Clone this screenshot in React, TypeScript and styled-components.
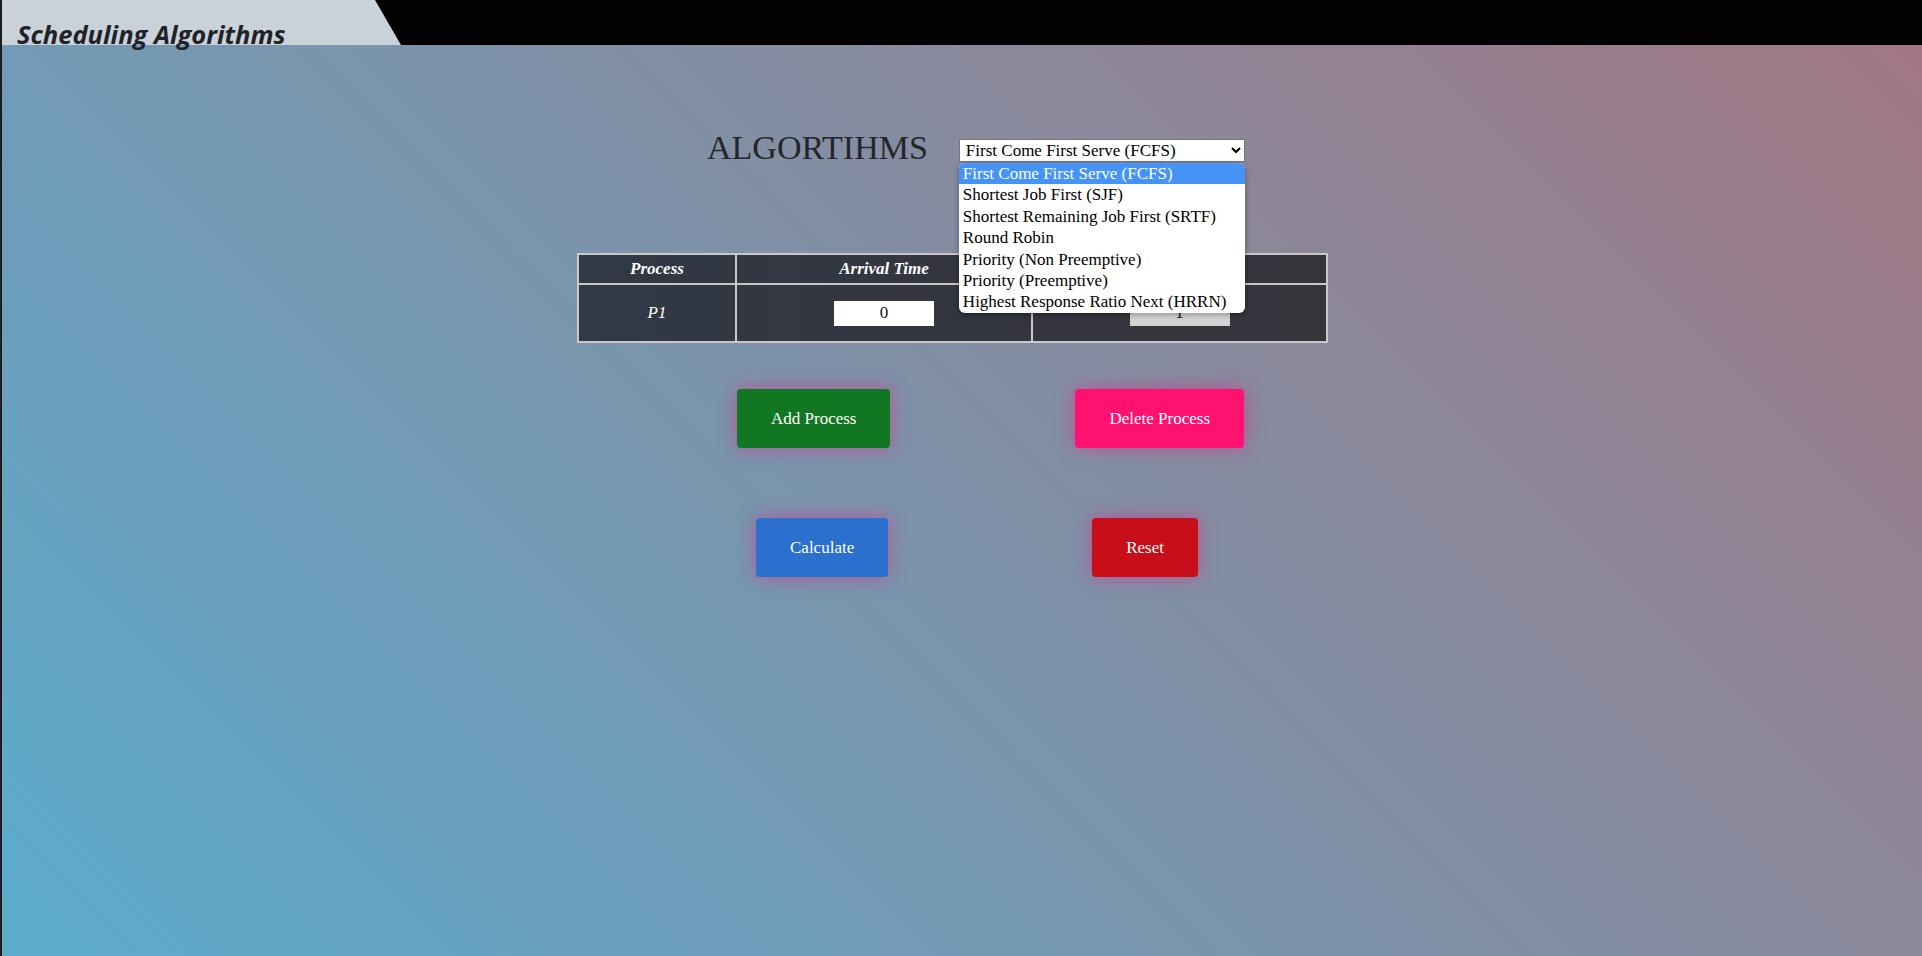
import styled, { createGlobalStyle } from "styled-components";

const GlobalStyle = createGlobalStyle`
  html, body {
    margin: 0;
    padding: 0;
    background: #1c1c1c;
  }
  * {
    box-sizing: border-box;
  }
`;

const algorithms = [
  "First Come First Serve (FCFS)",
  "Shortest Job First (SJF)",
  "Shortest Remaining Job First (SRTF)",
  "Round Robin",
  "Priority (Non Preemptive)",
  "Priority (Preemptive)",
  "Highest Response Ratio Next (HRRN)",
];

const App = () => {
  return (
    <Page>
      <GlobalStyle />
      <Header>
        <TitleTab>Scheduling Algorithms</TitleTab>
      </Header>
      <Main>
        <TitleRow>
          <Heading>ALGORTIHMS</Heading>
          <SelectWrap>
            <Select defaultValue={algorithms[0]}>
              {algorithms.map((a) => (
                <option key={a}>{a}</option>
              ))}
            </Select>
            <OptionList>
              {algorithms.map((a, i) => (
                <OptionItem key={a} $active={i === 0}>
                  {a}
                </OptionItem>
              ))}
            </OptionList>
          </SelectWrap>
        </TitleRow>

        <Table>
          <colgroup>
            <col style={{ width: 158 }} />
            <col style={{ width: 296 }} />
            <col style={{ width: 295 }} />
          </colgroup>
          <thead>
            <tr>
              <Th>Process</Th>
              <Th>Arrival Time</Th>
              <Th>Burst Time</Th>
            </tr>
          </thead>
          <tbody>
            <tr>
              <Td>P1</Td>
              <Td>
                <NumInput defaultValue="0" />
              </Td>
              <Td>
                <NumInput defaultValue="1" $muted />
              </Td>
            </tr>
          </tbody>
        </Table>

        <ButtonRow $indent={735} $gap={185} $top={46}>
          <Button $bg="#117722">Add Process</Button>
          <Button $bg="#ff1170">Delete Process</Button>
        </ButtonRow>
        <ButtonRow $indent={754} $gap={204} $top={70}>
          <Button $bg="#2a70cc">Calculate</Button>
          <Button $bg="#c80e18">Reset</Button>
        </ButtonRow>
      </Main>
    </Page>
  );
};

export default App;

const Page = styled.div`
  min-height: 100vh;
  margin-left: 2px;
  background: linear-gradient(45deg, #5baccd, #a37682);
  font-family: "Liberation Serif", "Times New Roman", serif;
`;

const Header = styled.header`
  height: 45px;
  background: #030303;
  display: flex;
`;

const TitleTab = styled.div`
  position: relative;
  width: 399px;
  height: 45px;
  padding-left: 15px;
  padding-top: 18px;
  font-family: "Open Sans", "Noto Sans", sans-serif;
  font-weight: 700;
  font-style: italic;
  font-size: 25.5px;
  line-height: 32px;
  color: #1f2329;
  white-space: nowrap;
  z-index: 1;

  &::before {
    content: "";
    position: absolute;
    inset: 0;
    background: #cad2d9;
    clip-path: polygon(0 0, 373px 0, 399px 100%, 0 100%);
    z-index: -1;
  }
`;

const Main = styled.main`
  display: flex;
  flex-direction: column;
  padding-bottom: 40px;
`;

const TitleRow = styled.div`
  display: flex;
  align-items: flex-start;
  gap: 31px;
  margin-top: 85px;
  padding-left: 705px;
`;

const Heading = styled.h1`
  margin: 0;
  font-size: 34px;
  line-height: 36px;
  font-weight: 400;
  color: #24262a;
`;

const SelectWrap = styled.div`
  position: relative;
  margin-top: 9px;
`;

const Select = styled.select`
  width: 286px;
  height: 23px;
  font-family: "Liberation Serif", "Times New Roman", serif;
  font-size: 17px;
  color: #000;
  background: #fff;
  border: 1px solid #767676;
  border-radius: 0;
  padding: 0 0 0 2px;
`;

const OptionList = styled.div`
  position: absolute;
  top: 24px;
  left: 0;
  width: 286px;
  padding: 0;
  background: #fff;
  border-radius: 6px;
  overflow: hidden;
  box-shadow: 0 2px 6px rgba(0, 0, 0, 0.35);
  z-index: 5;
`;

const OptionItem = styled.div<{ $active?: boolean }>`
  height: 21.4px;
  line-height: 21.4px;
  padding: 0 4px;
  font-size: 17px;
  white-space: nowrap;
  color: ${(p) => (p.$active ? "#fff" : "#000")};
  background: ${(p) => (p.$active ? "#4593f7" : "transparent")};
`;

const Table = styled.table`
  margin-top: 87px;
  margin-left: 575px;
  width: 749px;
  table-layout: fixed;
  border-collapse: collapse;
  background: linear-gradient(to right, #313944, #37343c);
  border: 2px solid #c8c8c8;
`;

const Th = styled.th`
  height: 30px;
  padding: 0;
  border: 2px solid #c8c8c8;
  font-size: 17px;
  font-weight: 700;
  font-style: italic;
  color: #fff;
  text-align: center;
`;

const Td = styled.td`
  height: 58px;
  padding: 0;
  border: 2px solid #c8c8c8;
  font-size: 17px;
  font-style: italic;
  color: #fff;
  text-align: center;
`;

const NumInput = styled.input<{ $muted?: boolean }>`
  width: 100px;
  height: 25px;
  border: none;
  padding: 0;
  outline: none;
  text-align: center;
  font-family: "Liberation Serif", "Times New Roman", serif;
  font-size: 17px;
  color: #111;
  vertical-align: middle;
  background: ${(p) =>
    p.$muted ? "linear-gradient(to bottom, #e6e6e6, #d0d0d0)" : "#fff"};
`;

const ButtonRow = styled.div<{ $indent: number; $gap: number; $top: number }>`
  display: flex;
  gap: ${(p) => p.$gap}px;
  margin-top: ${(p) => p.$top}px;
  padding-left: ${(p) => p.$indent}px;
`;

const Button = styled.button<{ $bg: string }>`
  height: 59px;
  padding: 0 34px;
  border: none;
  border-radius: 4px;
  background: ${(p) => p.$bg};
  color: #fff;
  font-family: "Liberation Serif", "Times New Roman", serif;
  font-size: 17px;
  box-shadow: 0 0 18px rgba(230, 30, 140, 0.55);
  cursor: pointer;
`;
